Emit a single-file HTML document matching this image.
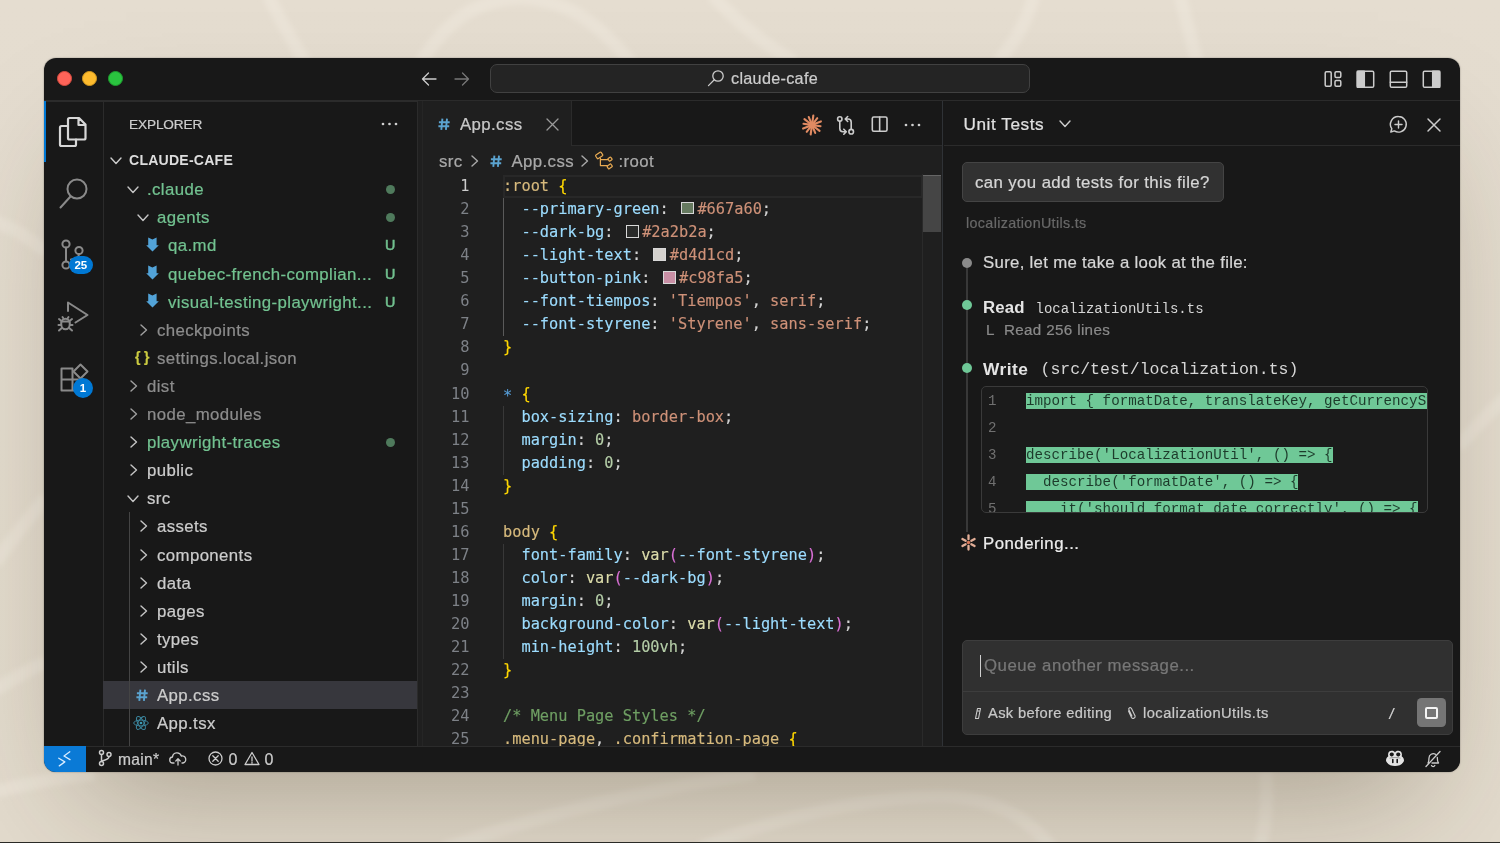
<!DOCTYPE html><html lang="en"><head><meta charset="utf-8"><title>claude-cafe</title><style>
*{box-sizing:border-box;margin:0;padding:0}
html,body{width:1500px;height:843px;overflow:hidden}
body{background:#e4dccf;font-family:"Liberation Sans",sans-serif;position:relative;color:#ccc;-webkit-font-smoothing:antialiased}
.a,.t,.m{position:absolute}
.t,.m{white-space:nowrap;font-size:16.8px;height:28px;line-height:29px}
.t{letter-spacing:.4px;-webkit-text-stroke:.22px currentColor}
.m{font-family:"Liberation Mono",monospace}
.bg{position:absolute;left:0;top:0;width:1500px;height:843px}
.shadow{position:absolute;left:44px;top:58px;width:1416px;height:714px;border-radius:12px;box-shadow:0 60px 120px -40px rgba(50,38,15,.34),0 0 1.5px rgba(0,0,0,.5)}
.win{position:absolute;left:44px;top:58px;width:1416px;height:714px;border-radius:12px;background:#181818;overflow:hidden}
.in{position:absolute;left:-44px;top:-58px;width:1500px;height:843px;will-change:transform}
svg{position:absolute;overflow:visible}
.ic{fill:none;stroke:#ccc;stroke-width:1.3;stroke-linecap:round;stroke-linejoin:round}
.g{color:#73c991}
.cl{position:absolute;left:503px;height:23px;line-height:23px;font-family:"DejaVu Sans Mono","Liberation Mono",monospace;font-size:15.3px;white-space:pre;color:#d4d4d4;-webkit-text-stroke:.15px currentColor}
.ln{position:absolute;left:420px;width:49.5px;text-align:right;height:23px;line-height:23px;font-family:"DejaVu Sans Mono","Liberation Mono",monospace;font-size:15.36px;color:#7d8187}
.sel{color:#d7ba7d}.br{color:#ffd700}.pr{color:#9cdcfe}.st{color:#ce9178}.nu{color:#b5cea8}.fn{color:#dcdcaa}.pa{color:#da70d6}.cm{color:#6f9f63}.kw{color:#569cd6}
.sw{display:inline-block;width:13px;height:12.6px;border:1.3px solid #d8d8d8;margin:0 3.4px 0 3px;vertical-align:-.4px}
.hl{background:#6fc897;color:#1d3b2b}
</style></head><body>
<svg class="bg" viewBox="0 0 1500 843" width="1500" height="843">
<defs><filter id="bl" x="-10%" y="-10%" width="120%" height="120%"><feGaussianBlur stdDeviation="2.5"/></filter>
<linearGradient id="bgg" x1="0" y1="0" x2="0" y2="1"><stop offset="0" stop-color="#e5ddd0"/><stop offset="1" stop-color="#e3dbcd"/></linearGradient></defs>
<rect width="1500" height="843" fill="url(#bgg)"/>
<g fill="none" stroke="#efe9de" stroke-opacity=".5" stroke-width="13" filter="url(#bl)">
<path d="M268 -5 C280 20 292 40 305 62"/>
<path d="M420 64 C450 15 480 0 520 -2 C570 0 600 25 632 64"/>
<path d="M712 -5 C740 25 765 45 795 62"/>
<path d="M1034 -5 C1028 20 1015 42 998 62"/>
<path d="M1180 -5 C1186 20 1192 42 1197 62"/>
<path d="M-5 222 C15 228 30 238 46 252"/>
<path d="M-5 563 C12 540 28 518 46 498"/>
<path d="M-5 690 C12 680 28 670 46 662"/>
<path d="M1458 447 C1475 428 1490 412 1505 398"/>
<path d="M-5 792 C20 785 50 778 95 774"/>
<path d="M445 848 C540 815 640 790 755 774"/>
<path d="M700 848 C780 815 880 795 950 797 C1000 800 1030 820 1052 848"/>
<path d="M1266 772 C1268 800 1266 825 1260 848"/>
</g></svg>
<div class="shadow"></div><div class="win"><div class="in">
<div class="a" style="left:44px;top:100.4px;width:1416px;height:1.2px;background:#2b2b2b"></div>
<div class="a" style="left:56.5px;top:70.7px;width:15px;height:15px;border-radius:50%;background:#fe6459;border:.7px solid #d94c40"></div>
<div class="a" style="left:82px;top:70.7px;width:15px;height:15px;border-radius:50%;background:#fdbb2e;border:.7px solid #d49a1f"></div>
<div class="a" style="left:107.5px;top:70.7px;width:15px;height:15px;border-radius:50%;background:#2ac43f;border:.7px solid #1e9c2f"></div>
<svg class="ic" style="left:421px;top:71px" width="16" height="16" viewBox="0 0 16 16"><path d="M15 8H1.5M7.5 2L1.5 8l6 6"/></svg>
<svg class="ic" style="left:454px;top:71px;stroke:#777" width="16" height="16" viewBox="0 0 16 16"><path d="M1 8h13.5M8.5 2l6 6-6 6"/></svg>
<div class="a" style="left:489.7px;top:63.6px;width:540.5px;height:29.6px;border-radius:7px;background:#242424;border:1.2px solid #414141"></div>
<svg class="ic" style="left:707px;top:69px" width="18" height="18" viewBox="0 0 18 18"><circle cx="11" cy="7" r="5.2"/><path d="M7.3 10.8L1.5 16.6"/></svg>
<div class="t" style="left:731px;top:64.2px;font-size:16.2px;letter-spacing:.3px">claude-cafe</div>
<svg class="ic" style="left:1323.5px;top:69.5px;stroke-width:1.5" width="18" height="18" viewBox="0 0 18 18"><rect x="1.2" y="1.8" width="6" height="14.4" rx="1.2"/><rect x="11" y="1.8" width="5.8" height="5.6" rx="1.2"/><rect x="11" y="10.6" width="5.8" height="5.6" rx="1.2"/></svg>
<svg class="ic" style="left:1355.5px;top:69.5px;stroke-width:1.5" width="19" height="18" viewBox="0 0 19 18"><rect x="1.3" y="1.3" width="16.4" height="15.9" rx="1.3"/><rect x="1.3" y="1.3" width="7" height="15.9" fill="#ccc"/></svg>
<svg class="ic" style="left:1388.5px;top:69.5px;stroke-width:1.5" width="19" height="18" viewBox="0 0 19 18"><rect x="1.3" y="1.3" width="16.4" height="15.9" rx="1.3"/><path d="M1.3 12.3h16.4"/></svg>
<svg class="ic" style="left:1422px;top:69.5px;stroke-width:1.5" width="19" height="18" viewBox="0 0 19 18"><rect x="1.3" y="1.3" width="16.4" height="15.9" rx="1.3"/><rect x="10.7" y="1.3" width="7" height="15.9" fill="#ccc"/></svg>
<div class="a" style="left:102.8px;top:101px;width:1px;height:645px;background:#2b2b2b"></div>
<div class="a" style="left:44px;top:101px;width:2px;height:61px;background:#0078d4"></div>
<svg class="ic" style="left:58px;top:116px;stroke:#d7d7d7;stroke-width:2.2" width="30" height="32" viewBox="0 0 30 32"><path d="M10 8.5V3.5a1.5 1.5 0 0 1 1.5-1.5H21l6.5 6.5V22a1.5 1.5 0 0 1-1.5 1.5H11.5a1.5 1.5 0 0 1-1.5-1.5V8.5zM20.5 2.5V9H27"/><path d="M10 10H3.5A1.5 1.5 0 0 0 2 11.5v17A1.5 1.5 0 0 0 3.5 30h13a1.5 1.5 0 0 0 1.5-1.5V23.5"/></svg>
<svg class="ic" style="left:58px;top:176px;stroke:#8a8a8a;stroke-width:2" width="32" height="34" viewBox="0 0 32 34"><circle cx="19" cy="13" r="9.5"/><path d="M12.5 20.5L2.5 31.5"/></svg>
<svg class="ic" style="left:58px;top:238px;stroke:#8a8a8a;stroke-width:2" width="32" height="34" viewBox="0 0 32 34"><circle cx="8" cy="6" r="3.6"/><circle cx="21" cy="12.5" r="3.6"/><circle cx="8" cy="27" r="3.6"/><path d="M8 9.6v13.8M21 16.1c0 4-4 5-8 5.5"/></svg>
<div class="a" style="left:69px;top:255.7px;width:23.6px;height:18.6px;border-radius:9.3px;background:#0078d4;color:#fff;font-size:11.5px;font-weight:bold;text-align:center;line-height:18.6px">25</div>
<svg class="ic" style="left:57px;top:299px;stroke:#8a8a8a;stroke-width:2" width="34" height="34" viewBox="0 0 34 34"><path d="M11 12V3.5l19.5 12.5-12 7.5"/><ellipse cx="8.5" cy="25" rx="4.3" ry="5.3"/><path d="M4.5 22.5h8M2 20l2.5 2M15 20l-2.5 2M1.5 26h2.7M12.8 26h2.7M2 31.5l2.8-2.5M15 31.5l-2.8-2.5M6.5 19.5l-1-1.5M10.5 19.5l1-1.5"/></svg>
<svg class="ic" style="left:59px;top:363.2px;stroke:#8a8a8a;stroke-width:2" width="32" height="32" viewBox="0 0 32 32"><path d="M2.5 5.5h11v22h-11zM2.5 16.5h22v11h-11"/><path d="M21.5 1.5l7 7-7 7-7-7z"/></svg>
<div class="a" style="left:73px;top:378px;width:20px;height:20px;border-radius:10px;background:#0078d4;color:#fff;font-size:11.5px;font-weight:bold;text-align:center;line-height:20px">1</div>
<div class="a" style="left:417px;top:101px;width:1px;height:645px;background:#2b2b2b"></div>
<div class="t" style="left:129px;top:110px;font-size:13.6px;color:#ccc;letter-spacing:-.1px">EXPLORER</div>
<svg style="left:380.5px;top:122px" width="17" height="4" viewBox="0 0 17 4"><circle cx="2" cy="2" r="1.35" fill="#d0d0d0"/><circle cx="8.5" cy="2" r="1.35" fill="#d0d0d0"/><circle cx="15" cy="2" r="1.35" fill="#d0d0d0"/></svg>
<svg class="ic" style="left:110px;top:156.5px;stroke:#ccc;stroke-width:1.4" width="12" height="8" viewBox="0 0 12 8"><path d="M1 1l5 5.5 5-5.5"/></svg>
<div class="t" style="left:129px;top:145.9px;font-size:14.1px;font-weight:bold;-webkit-text-stroke:0;color:#ddd;letter-spacing:.2px">CLAUDE-CAFE</div>
<div class="a" style="left:103px;top:681px;width:314px;height:28px;background:#37373d"></div>
<div class="a" style="left:129.4px;top:512.3px;width:1px;height:260px;background:#444"></div>
<svg class="ic" style="left:127px;top:185.7px;stroke:#c5c5c5;stroke-width:1.4" width="12" height="8" viewBox="0 0 12 8"><path d="M1 1l5 5.5 5-5.5"/></svg>
<div class="t" style="left:147px;top:175.2px;color:#72c290">.claude</div>
<div class="a" style="left:385.5px;top:184.7px;width:9px;height:9px;border-radius:50%;background:#4f7a5c"></div>
<svg class="ic" style="left:137px;top:213.79999999999998px;stroke:#c5c5c5;stroke-width:1.4" width="12" height="8" viewBox="0 0 12 8"><path d="M1 1l5 5.5 5-5.5"/></svg>
<div class="t" style="left:157px;top:203.3px;color:#72c290">agents</div>
<div class="a" style="left:385.5px;top:212.8px;width:9px;height:9px;border-radius:50%;background:#4f7a5c"></div>
<svg style="left:145.5px;top:237.2px" width="13" height="15" viewBox="0 0 13 15"><path d="M2.2 0.5L6.4 2.5 10.6 0.5V8.2H12.8L6.5 14.6 0.2 8.2H2.2z" fill="#52a3d8"/></svg>
<div class="t" style="left:168px;top:231.4px;color:#72c290">qa.md</div>
<div class="t" style="left:385px;top:231.4px;color:#72c290;font-size:14.3px;-webkit-text-stroke:.55px #72c290">U</div>
<svg style="left:145.5px;top:265.3px" width="13" height="15" viewBox="0 0 13 15"><path d="M2.2 0.5L6.4 2.5 10.6 0.5V8.2H12.8L6.5 14.6 0.2 8.2H2.2z" fill="#52a3d8"/></svg>
<div class="t" style="left:168px;top:259.5px;color:#72c290">quebec-french-complian...</div>
<div class="t" style="left:385px;top:259.5px;color:#72c290;font-size:14.3px;-webkit-text-stroke:.55px #72c290">U</div>
<svg style="left:145.5px;top:293.4px" width="13" height="15" viewBox="0 0 13 15"><path d="M2.2 0.5L6.4 2.5 10.6 0.5V8.2H12.8L6.5 14.6 0.2 8.2H2.2z" fill="#52a3d8"/></svg>
<div class="t" style="left:168px;top:287.6px;color:#72c290">visual-testing-playwright...</div>
<div class="t" style="left:385px;top:287.6px;color:#72c290;font-size:14.3px;-webkit-text-stroke:.55px #72c290">U</div>
<svg class="ic" style="left:139.5px;top:323.7px;stroke:#a0a0a0;stroke-width:1.4" width="8" height="12" viewBox="0 0 8 12"><path d="M1 1l5.5 5-5.5 5"/></svg>
<div class="t" style="left:157px;top:315.7px;color:#8c8c8c">checkpoints</div>
<div class="t" style="left:135px;top:343.3px;font-size:14px;font-weight:bold;color:#cbcb41;letter-spacing:3.5px">{}</div>
<div class="t" style="left:157px;top:343.8px;color:#8c8c8c">settings.local.json</div>
<svg class="ic" style="left:129.5px;top:379.9px;stroke:#a0a0a0;stroke-width:1.4" width="8" height="12" viewBox="0 0 8 12"><path d="M1 1l5.5 5-5.5 5"/></svg>
<div class="t" style="left:147px;top:371.9px;color:#8c8c8c">dist</div>
<svg class="ic" style="left:129.5px;top:408px;stroke:#a0a0a0;stroke-width:1.4" width="8" height="12" viewBox="0 0 8 12"><path d="M1 1l5.5 5-5.5 5"/></svg>
<div class="t" style="left:147px;top:400px;color:#8c8c8c">node_modules</div>
<svg class="ic" style="left:129.5px;top:436.1px;stroke:#c5c5c5;stroke-width:1.4" width="8" height="12" viewBox="0 0 8 12"><path d="M1 1l5.5 5-5.5 5"/></svg>
<div class="t" style="left:147px;top:428.1px;color:#72c290">playwright-traces</div>
<div class="a" style="left:385.5px;top:437.6px;width:9px;height:9px;border-radius:50%;background:#4f7a5c"></div>
<svg class="ic" style="left:129.5px;top:464.2px;stroke:#c5c5c5;stroke-width:1.4" width="8" height="12" viewBox="0 0 8 12"><path d="M1 1l5.5 5-5.5 5"/></svg>
<div class="t" style="left:147px;top:456.2px;color:#cccccc">public</div>
<svg class="ic" style="left:127px;top:494.8px;stroke:#c5c5c5;stroke-width:1.4" width="12" height="8" viewBox="0 0 12 8"><path d="M1 1l5 5.5 5-5.5"/></svg>
<div class="t" style="left:147px;top:484.3px;color:#cccccc">src</div>
<svg class="ic" style="left:139.5px;top:520.4000000000001px;stroke:#c5c5c5;stroke-width:1.4" width="8" height="12" viewBox="0 0 8 12"><path d="M1 1l5.5 5-5.5 5"/></svg>
<div class="t" style="left:157px;top:512.4px;color:#cccccc">assets</div>
<svg class="ic" style="left:139.5px;top:548.5px;stroke:#c5c5c5;stroke-width:1.4" width="8" height="12" viewBox="0 0 8 12"><path d="M1 1l5.5 5-5.5 5"/></svg>
<div class="t" style="left:157px;top:540.5px;color:#cccccc">components</div>
<svg class="ic" style="left:139.5px;top:576.6px;stroke:#c5c5c5;stroke-width:1.4" width="8" height="12" viewBox="0 0 8 12"><path d="M1 1l5.5 5-5.5 5"/></svg>
<div class="t" style="left:157px;top:568.6px;color:#cccccc">data</div>
<svg class="ic" style="left:139.5px;top:604.7px;stroke:#c5c5c5;stroke-width:1.4" width="8" height="12" viewBox="0 0 8 12"><path d="M1 1l5.5 5-5.5 5"/></svg>
<div class="t" style="left:157px;top:596.7px;color:#cccccc">pages</div>
<svg class="ic" style="left:139.5px;top:632.8px;stroke:#c5c5c5;stroke-width:1.4" width="8" height="12" viewBox="0 0 8 12"><path d="M1 1l5.5 5-5.5 5"/></svg>
<div class="t" style="left:157px;top:624.8px;color:#cccccc">types</div>
<svg class="ic" style="left:139.5px;top:660.9000000000001px;stroke:#c5c5c5;stroke-width:1.4" width="8" height="12" viewBox="0 0 8 12"><path d="M1 1l5.5 5-5.5 5"/></svg>
<div class="t" style="left:157px;top:652.9px;color:#cccccc">utils</div>
<svg style="left:135.8px;top:688.9px;fill:none;stroke:#5ba3cf;stroke-width:1.9" width="12" height="12.5" viewBox="0 0 12 12.5"><path d="M4.4 0.6L3.3 11.9M9 0.6L7.9 11.9M0.9 4.2H11.7M0.4 8.3H11.2"/></svg>
<div class="t" style="left:157px;top:681px;color:#cccccc">App.css</div>
<svg style="left:133px;top:715.0999999999999px;fill:none;stroke:#3b859d;stroke-width:.95" width="16" height="16" viewBox="0 0 16 16"><ellipse cx="8" cy="8" rx="7.3" ry="2.9"/><ellipse cx="8" cy="8" rx="7.3" ry="2.9" transform="rotate(60 8 8)"/><ellipse cx="8" cy="8" rx="7.3" ry="2.9" transform="rotate(120 8 8)"/><circle cx="8" cy="8" r="1.3" fill="#3d9bb3" stroke="none"/></svg>
<div class="t" style="left:157px;top:709.1px;color:#cccccc">App.tsx</div>
<div class="a" style="left:418px;top:101px;width:524px;height:645px;background:#1f1f1f"></div>
<div class="a" style="left:422px;top:101px;width:1px;height:645px;background:#252525"></div>
<div class="a" style="left:571px;top:101px;width:371px;height:45.2px;background:#181818;border-left:1px solid #2b2b2b;border-bottom:1.2px solid #2b2b2b"></div>
<svg style="left:437.5px;top:117.5px;fill:none;stroke:#5ba3cf;stroke-width:1.9" width="12" height="12.5" viewBox="0 0 12 12.5"><path d="M4.4 0.6L3.3 11.9M9 0.6L7.9 11.9M0.9 4.2H11.7M0.4 8.3H11.2"/></svg>
<div class="t" style="left:460px;top:110px;color:#c8c8c8">App.css</div>
<svg class="ic" style="left:546px;top:118px;stroke:#9a9a9a;stroke-width:1.3" width="13" height="13" viewBox="0 0 13 13"><path d="M1 1l11 11M12 1L1 12"/></svg>
<svg style="left:801.2px;top:113.7px" width="22" height="22" viewBox="-11 -11 22 22"><g stroke="#e08a62" stroke-width="2.1" stroke-linecap="round"><path d="M0 -2.5V-9.6" transform="rotate(8)"/><path d="M0 -2.5V-8.6" transform="rotate(38)"/><path d="M0 -2.5V-9.6" transform="rotate(68)"/><path d="M0 -2.5V-8.6" transform="rotate(98)"/><path d="M0 -2.5V-9.6" transform="rotate(128)"/><path d="M0 -2.5V-8.6" transform="rotate(158)"/><path d="M0 -2.5V-9.6" transform="rotate(188)"/><path d="M0 -2.5V-8.6" transform="rotate(218)"/><path d="M0 -2.5V-9.6" transform="rotate(248)"/><path d="M0 -2.5V-8.6" transform="rotate(278)"/><path d="M0 -2.5V-9.6" transform="rotate(308)"/><path d="M0 -2.5V-8.6" transform="rotate(338)"/></g><circle r="3.6" fill="#e08a62"/></svg>
<svg class="ic" style="left:836px;top:114.8px;stroke-width:1.6" width="20" height="22" viewBox="0 0 20 22"><circle cx="3.8" cy="4" r="2.2"/><circle cx="15.2" cy="16.7" r="2.3"/><path d="M3.8 6.3V13.5a3.2 3.2 0 0 0 3.2 3.2h2.8M7.8 14.2l2.5 2.5-2.5 2.5M15.2 14.3V7.2a3.2 3.2 0 0 0-3.2-3.2H9.5M11.7 1.5L9.2 4l2.5 2.5"/></svg>
<svg class="ic" style="left:871px;top:115px;stroke-width:1.6" width="18" height="18" viewBox="0 0 18 18"><rect x="1.3" y="2" width="14.7" height="14.3" rx="1.5"/><path d="M8.65 2v14.3"/></svg>
<svg style="left:903.7px;top:122.7px" width="17" height="4" viewBox="0 0 17 4"><circle cx="2" cy="2" r="1.35" fill="#d0d0d0"/><circle cx="8.5" cy="2" r="1.35" fill="#d0d0d0"/><circle cx="15" cy="2" r="1.35" fill="#d0d0d0"/></svg>
<div class="t" style="left:439px;top:146.5px;color:#a9a9a9">src</div>
<svg class="ic" style="left:470.5px;top:155px;stroke:#a9a9a9;stroke-width:1.4" width="8" height="12" viewBox="0 0 8 12"><path d="M1 1l5.5 5-5.5 5"/></svg>
<svg style="left:489.5px;top:154.6px;fill:none;stroke:#5ba3cf;stroke-width:1.9" width="12" height="12.5" viewBox="0 0 12 12.5"><path d="M4.4 0.6L3.3 11.9M9 0.6L7.9 11.9M0.9 4.2H11.7M0.4 8.3H11.2"/></svg>
<div class="t" style="left:511.5px;top:146.5px;color:#a9a9a9">App.css</div>
<svg class="ic" style="left:580.5px;top:155px;stroke:#a9a9a9;stroke-width:1.4" width="8" height="12" viewBox="0 0 8 12"><path d="M1 1l5.5 5-5.5 5"/></svg>
<svg class="ic" style="left:594px;top:151px;stroke:#e8aa52;stroke-width:1.2" width="22" height="20" viewBox="0 0 22 20"><rect x="1.9" y="2.3" width="6.6" height="4.2" rx=".8" transform="rotate(-35 5.2 4.4)"/><rect x="14.3" y="6.5" width="3.4" height="3.2" rx=".6" transform="rotate(-35 16 8.1)"/><rect x="13.4" y="13.8" width="4.6" height="3.2" rx=".6" transform="rotate(-35 15.7 15.4)"/><path d="M6.4 7.3V14.6H13.2M6.4 8.6H13.9"/></svg>
<div class="t" style="left:618.5px;top:146.5px;color:#a9a9a9">:root</div>
<div class="a" style="left:503px;top:175.3px;width:419.7px;height:23px;border:2.4px solid #282828"></div>
<div class="a" style="left:503.4px;top:198.1px;width:1px;height:138.2px;background:#5a5a5a"></div>
<div class="a" style="left:503.4px;top:405.5px;width:1px;height:69.1px;background:#383838"></div>
<div class="a" style="left:503.4px;top:543.7px;width:1px;height:115.2px;background:#383838"></div>
<div class="ln" style="top:175.1px;color:#ccc">1</div>
<div class="cl" style="top:175.1px"><span class="sel">:root</span> <span class="br">{</span></div>
<div class="ln" style="top:198.1px">2</div>
<div class="cl" style="top:198.1px">  <span class="pr">--primary-green</span>: <span class="sw" style="background:#667a60"></span><span class="st">#667a60</span>;</div>
<div class="ln" style="top:221.2px">3</div>
<div class="cl" style="top:221.2px">  <span class="pr">--dark-bg</span>: <span class="sw" style="background:#2a2b2a"></span><span class="st">#2a2b2a</span>;</div>
<div class="ln" style="top:244.2px">4</div>
<div class="cl" style="top:244.2px">  <span class="pr">--light-text</span>: <span class="sw" style="background:#d4d1cd"></span><span class="st">#d4d1cd</span>;</div>
<div class="ln" style="top:267.3px">5</div>
<div class="cl" style="top:267.3px">  <span class="pr">--button-pink</span>: <span class="sw" style="background:#c98fa5"></span><span class="st">#c98fa5</span>;</div>
<div class="ln" style="top:290.3px">6</div>
<div class="cl" style="top:290.3px">  <span class="pr">--font-tiempos</span>: <span class="st">'Tiempos'</span>, <span class="st">serif</span>;</div>
<div class="ln" style="top:313.3px">7</div>
<div class="cl" style="top:313.3px">  <span class="pr">--font-styrene</span>: <span class="st">'Styrene'</span>, <span class="st">sans-serif</span>;</div>
<div class="ln" style="top:336.4px">8</div>
<div class="cl" style="top:336.4px"><span class="br">}</span></div>
<div class="ln" style="top:359.4px">9</div>
<div class="ln" style="top:382.5px">10</div>
<div class="cl" style="top:382.5px"><span class="kw" style="position:relative;top:2.5px">*</span> <span class="br">{</span></div>
<div class="ln" style="top:405.5px">11</div>
<div class="cl" style="top:405.5px">  <span class="pr">box-sizing</span>: <span class="st">border-box</span>;</div>
<div class="ln" style="top:428.5px">12</div>
<div class="cl" style="top:428.5px">  <span class="pr">margin</span>: <span class="nu">0</span>;</div>
<div class="ln" style="top:451.6px">13</div>
<div class="cl" style="top:451.6px">  <span class="pr">padding</span>: <span class="nu">0</span>;</div>
<div class="ln" style="top:474.6px">14</div>
<div class="cl" style="top:474.6px"><span class="br">}</span></div>
<div class="ln" style="top:497.7px">15</div>
<div class="ln" style="top:520.7px">16</div>
<div class="cl" style="top:520.7px"><span class="sel">body</span> <span class="br">{</span></div>
<div class="ln" style="top:543.7px">17</div>
<div class="cl" style="top:543.7px">  <span class="pr">font-family</span>: <span class="fn">var</span><span class="pa">(</span><span class="pr">--font-styrene</span><span class="pa">)</span>;</div>
<div class="ln" style="top:566.8px">18</div>
<div class="cl" style="top:566.8px">  <span class="pr">color</span>: <span class="fn">var</span><span class="pa">(</span><span class="pr">--dark-bg</span><span class="pa">)</span>;</div>
<div class="ln" style="top:589.8px">19</div>
<div class="cl" style="top:589.8px">  <span class="pr">margin</span>: <span class="nu">0</span>;</div>
<div class="ln" style="top:612.9px">20</div>
<div class="cl" style="top:612.9px">  <span class="pr">background-color</span>: <span class="fn">var</span><span class="pa">(</span><span class="pr">--light-text</span><span class="pa">)</span>;</div>
<div class="ln" style="top:635.9px">21</div>
<div class="cl" style="top:635.9px">  <span class="pr">min-height</span>: <span class="nu">100vh</span>;</div>
<div class="ln" style="top:658.9px">22</div>
<div class="cl" style="top:658.9px"><span class="br">}</span></div>
<div class="ln" style="top:682px">23</div>
<div class="ln" style="top:705px">24</div>
<div class="cl" style="top:705px"><span class="cm">/* Menu Page Styles */</span></div>
<div class="ln" style="top:728.1px">25</div>
<div class="cl" style="top:728.1px"><span class="sel">.menu-page</span>, <span class="sel">.confirmation-page</span> <span class="br">{</span></div>
<div class="a" style="left:922px;top:174px;width:1px;height:572px;background:#2a2a2a"></div>
<div class="a" style="left:922.7px;top:175px;width:18px;height:57px;background:#454545;border-top:1.4px solid #666"></div>
<div class="a" style="left:942px;top:101px;width:518px;height:645px;background:#181818;border-left:1.7px solid #2f3236"></div>
<div class="a" style="left:943.5px;top:145px;width:517px;height:1.2px;background:#2b2b2b"></div>
<div class="t" style="left:963.5px;top:110px;font-size:17.2px;color:#e0e0e0;letter-spacing:.55px">Unit Tests</div>
<svg class="ic" style="left:1059px;top:120px;stroke:#ccc;stroke-width:1.4" width="12" height="8" viewBox="0 0 12 8"><path d="M1 1l5 5.5 5-5.5"/></svg>
<svg class="ic" style="left:1388.5px;top:115.3px;stroke-width:1.45" width="19" height="19" viewBox="0 0 19 19"><path d="M9.5 1.5a7.8 7.8 0 1 1-4.2 14.4L1.8 17l1-3.3A7.8 7.8 0 0 1 9.5 1.5zM9.5 6v7M6 9.5h7"/></svg>
<svg class="ic" style="left:1426.5px;top:117.8px;stroke-width:1.5" width="14" height="14" viewBox="0 0 14 14"><path d="M1 1l12 12M13 1L1 13"/></svg>
<div class="a" style="left:962px;top:162px;width:262px;height:40px;border-radius:5px;background:#313131;border:1px solid #444"></div>
<div class="t" style="left:975px;top:167.5px;color:#d6d6d6">can you add tests for this file?</div>
<div class="t" style="left:966px;top:209px;font-size:14.3px;color:#686868;letter-spacing:.35px">localizationUtils.ts</div>
<div class="a" style="left:966.2px;top:268px;width:1.5px;height:264px;background:#383838"></div>
<div class="a" style="left:962px;top:258.3px;width:10px;height:10px;border-radius:50%;background:#8a8a8a"></div>
<div class="a" style="left:962px;top:300.3px;width:10px;height:10px;border-radius:50%;background:#6fc897"></div>
<div class="a" style="left:962px;top:363.4px;width:10px;height:10px;border-radius:50%;background:#6fc897"></div>
<div class="t" style="left:983px;top:248px;color:#d6d6d6;letter-spacing:.3px">Sure, let me take a look at the file:</div>
<div class="t" style="left:983px;top:292.5px;color:#e4e4e4;font-weight:bold;letter-spacing:.15px;-webkit-text-stroke:0">Read</div>
<div class="m" style="left:1035.5px;top:295px;font-size:14px;color:#d6d6d6">localizationUtils.ts</div>
<div class="t" style="left:986px;top:315.2px;font-size:15.2px;color:#8a8a8a;letter-spacing:.35px">L&nbsp; Read 256 lines</div>
<div class="t" style="left:983px;top:355px;color:#e4e4e4;font-weight:bold;-webkit-text-stroke:0;font-size:17.3px;letter-spacing:.5px">Write</div>
<div class="m" style="left:1040.5px;top:355px;font-size:16.55px;color:#d6d6d6">(src/test/localization.ts)</div>
<div class="a" style="left:981px;top:386.3px;width:447px;height:126.7px;border-radius:5px;background:#1b1b1b;border:1px solid #3a3a3a;overflow:hidden">
<div class="m" style="left:6px;top:-0.30000000000001137px;font-size:14.1px;color:#707070">1</div>
<div class="m" style="left:44px;top:5.699999999999989px;height:16.5px;line-height:17.5px;font-size:14.2px;white-space:pre" ><span class="hl">import { formatDate, translateKey, getCurrencySymbol } from</span></div>
<div class="m" style="left:6px;top:26.69999999999999px;font-size:14.1px;color:#707070">2</div>
<div class="m" style="left:6px;top:53.69999999999999px;font-size:14.1px;color:#707070">3</div>
<div class="m" style="left:44px;top:59.69999999999999px;height:16.5px;line-height:17.5px;font-size:14.2px;white-space:pre" ><span class="hl">describe('LocalizationUtil', () => {</span></div>
<div class="m" style="left:6px;top:80.69999999999999px;font-size:14.1px;color:#707070">4</div>
<div class="m" style="left:44px;top:86.69999999999999px;height:16.5px;line-height:17.5px;font-size:14.2px;white-space:pre" ><span class="hl">  describe('formatDate', () => {</span></div>
<div class="m" style="left:6px;top:107.69999999999999px;font-size:14.1px;color:#707070">5</div>
<div class="m" style="left:44px;top:113.69999999999999px;height:16.5px;line-height:17.5px;font-size:14.2px;white-space:pre" ><span class="hl">    it('should format date correctly', () => {</span></div>
</div>
<svg style="left:959.5px;top:534.3px" width="17" height="17" viewBox="-8.5 -8.5 17 17"><g stroke="#e2ad96" stroke-width="2.3" stroke-linecap="round"><path d="M0 -3.3V-7" transform="rotate(0)"/><path d="M0 -3.3V-7" transform="rotate(60)"/><path d="M0 -3.3V-7" transform="rotate(120)"/><path d="M0 -3.3V-7" transform="rotate(180)"/><path d="M0 -3.3V-7" transform="rotate(240)"/><path d="M0 -3.3V-7" transform="rotate(300)"/></g><circle r="1.7" fill="#d97757"/></svg>
<div class="t" style="left:983px;top:528.5px;color:#ececec;letter-spacing:.5px">Pondering...</div>
<div class="a" style="left:962px;top:640px;width:491px;height:94.5px;border-radius:5px;background:#303030;border:1px solid #3d3d3d"></div>
<div class="a" style="left:963px;top:691px;width:489px;height:1px;background:#3d3d3d"></div>
<div class="a" style="left:979.5px;top:655px;width:1.3px;height:22px;background:#d0d0d0"></div>
<div class="t" style="left:984px;top:651.2px;color:#777;letter-spacing:.5px">Queue another message...</div>
<svg class="ic" style="left:974px;top:707px;stroke-width:1.1" width="8" height="13" viewBox="0 0 8 13"><path d="M3.5 1.5h3L4.5 11.5h-3zM3 4h3"/></svg>
<div class="t" style="left:988px;top:699px;font-size:14.7px;color:#c8c8c8;letter-spacing:.36px">Ask before editing</div>
<svg class="ic" style="left:1126px;top:706px;stroke-width:1.1" width="11" height="14" viewBox="0 0 11 14"><path d="M2.5 5l3 6.5a2 2 0 0 0 3.6-1.6L5.5 2.5a1.4 1.4 0 0 0-2.6 1.2l3 6.3"/></svg>
<div class="t" style="left:1143px;top:699px;font-size:14.7px;color:#c8c8c8;letter-spacing:.45px">localizationUtils.ts</div>
<div class="t" style="left:1389.5px;top:700px;font-size:14.3px;color:#d8d8d8;font-style:italic">/</div>
<div class="a" style="left:1417.1px;top:698.3px;width:28.8px;height:28.8px;border-radius:4.5px;background:#757575"></div>
<div class="a" style="left:1425.4px;top:706.6px;width:12.2px;height:12.2px;border-radius:2px;border:2px solid #f4f4f4"></div>
<div class="a" style="left:44px;top:745.6px;width:1416px;height:27px;background:#181818;border-top:1px solid #2b2b2b"></div>
<div class="a" style="left:44px;top:745.6px;width:42px;height:27px;background:#0a7ad6"></div>
<svg class="ic" style="left:58px;top:750.5px;stroke:#d8ecff;stroke-width:1.3" width="13" height="16" viewBox="0 0 13 16"><path d="M0.8 7.2l6 3.7-5.5 4M11.8 0.8L6 5l6 3.6"/></svg>
<svg class="ic" style="left:97.5px;top:749.3px;stroke-width:1.5" width="14" height="18" viewBox="0 0 14 18"><circle cx="3.5" cy="3.5" r="2"/><circle cx="11" cy="5.5" r="2"/><circle cx="3.5" cy="14.5" r="2"/><path d="M3.5 5.5v7M11 7.5c0 3-4 3.5-7 4.5"/></svg>
<div class="t" style="left:118px;top:745px;font-size:15.6px;color:#ccc;letter-spacing:.3px">main*</div>
<svg class="ic" style="left:168.5px;top:751.8px;stroke-width:1.3" width="18" height="14" viewBox="0 0 18 14"><path d="M5 11H4a3 3 0 0 1-.5-6 4.5 4.5 0 0 1 8.8-1A3.5 3.5 0 0 1 14 11h-1M9 13V7M6.8 9L9 6.8 11.2 9"/></svg>
<svg class="ic" style="left:207.7px;top:751.3px;stroke-width:1.3" width="15" height="15" viewBox="0 0 15 15"><circle cx="7.5" cy="7.5" r="6.5"/><path d="M4.8 4.8l5.4 5.4M10.2 4.8l-5.4 5.4"/></svg>
<div class="t" style="left:228.5px;top:745.1px;font-size:16px;color:#ccc">0</div>
<svg class="ic" style="left:243.5px;top:751px;stroke-width:1.3" width="16" height="15" viewBox="0 0 16 15"><path d="M8 1.5L15 13.5H1zM8 6v4M8 11.5v.5"/></svg>
<div class="t" style="left:264.5px;top:745.1px;font-size:16px;color:#ccc">0</div>
<svg style="left:1384.6px;top:750px" width="20" height="17" viewBox="0 0 20 17"><path d="M3.3 6.3C2.3 2.3 4.5 0.8 6.8 0.8c1.5 0 2.7.5 3.2 1.6.5-1.1 1.7-1.6 3.2-1.6 2.3 0 4.5 1.5 3.5 5.5 1.7 1.1 2.3 2.5 2.3 4.7-2 3.8-5.3 5-9 5s-7-1.2-9-5c0-2.2.6-3.6 2.3-4.7z" fill="#e4e4e4"/><rect x="4.7" y="2.4" width="4.1" height="4" rx="1.8" fill="#181818"/><rect x="11.2" y="2.4" width="4.1" height="4" rx="1.8" fill="#181818"/><path d="M7.8 9.6v2.8M12.2 9.6v2.8" stroke="#181818" stroke-width="1.6" stroke-linecap="round"/><path d="M4.5 8.2c3.4-1 7.6-1 11 0" stroke="#181818" stroke-width=".7" fill="none" opacity=".5"/></svg>
<svg class="ic" style="left:1424.3px;top:749.5px;stroke-width:1.3" width="18" height="18" viewBox="0 0 18 18"><path d="M4 13c1-1.5 1-3 1-5a4.3 4.3 0 0 1 6.5-3.7M13.3 7.5c0 2.5 0 4 1.2 5.5H8M7.5 15.5a1.8 1.8 0 0 0 3.3 0M16 1.5L2 16.5"/></svg>
</div></div>
<div class="a" style="left:0;top:842px;width:1500px;height:1px;background:#2a2a26"></div>
</body></html>
